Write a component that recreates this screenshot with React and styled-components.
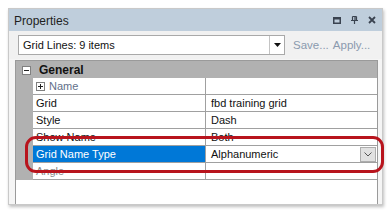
import React from 'react';
import styled, { createGlobalStyle } from 'styled-components';

const GlobalStyle = createGlobalStyle`
    html, body {
        margin: 0;
        padding: 0;
        background: #ffffff;
    }
`;

const uiFont = `"Liberation Sans", Arial, sans-serif`;

const Page = styled.div`
    position: relative;
    width: 392px;
    height: 213px;
    padding: 8px 0 0 8px;
    box-sizing: border-box;
    overflow: hidden;
`;

const Window = styled.div`
    width: 375px;
    height: 197px;
    box-sizing: border-box;
    border: 1px solid #c9c9c9;
    background: #f5f5f5;
    box-shadow: 1px 2px 3px rgba(0, 0, 0, 0.25);
    display: flex;
    flex-direction: column;
    font-family: ${uiFont};
`;

const TitleBar = styled.div`
    height: 22px;
    background: #bfcedc;
    display: flex;
    align-items: center;
    padding: 0 6px 0 5px;
    font-size: 12px;
    color: #1e1e1e;
`;

const Title = styled.span`
    flex: 1;
    padding-top: 1px;
`;

const TitleIcons = styled.div`
    display: flex;
    align-items: center;
    gap: 10px;
`;

const Toolbar = styled.div`
    height: 28px;
    display: flex;
    align-items: center;
    padding: 0 0 0 9px;
    background: #f1f1f1;
`;

const Combo = styled.div`
    width: 267px;
    height: 20px;
    box-sizing: border-box;
    border: 1px solid #a9a9a9;
    background: #ffffff;
    display: flex;
    align-items: stretch;
    font-size: 11px;
    color: #111;
`;

const ComboText = styled.div`
    flex: 1;
    display: flex;
    align-items: center;
    padding-left: 4px;
`;

const ComboArrow = styled.div`
    width: 14px;
    border-left: 1px solid #c4c4c4;
    display: flex;
    align-items: center;
    justify-content: center;
`;

const ToolLink = styled.span`
    font-size: 11.5px;
    color: #8b9aae;
    margin-left: ${(p) => p.gap}px;
`;

const Grid = styled.div`
    flex: 1;
    margin: 1px 4px 0 6px;
    border: 1px solid #9a9a9a;
    border-bottom: none;
    background: #ffffff;
    display: grid;
    grid-template-columns: 17px 173px 1fr;
    grid-auto-rows: 17px;
    align-content: start;
    font-size: 11px;
`;

const Margin = styled.div`
    background: #b1b1b1;
`;

const CategoryRow = styled.div`
    grid-column: 1 / 4;
    height: 18px;
    background: #b1b1b1;
    display: flex;
    align-items: center;
    font-weight: bold;
    font-size: 12px;
    color: #111;
`;

const CategoryToggle = styled.span`
    width: 17px;
    display: flex;
    justify-content: center;
    padding-left: 2px;
`;

const CategoryLabel = styled.span`
    padding-left: 4px;
`;

const Cell = styled.div`
    display: flex;
    align-items: center;
    gap: 4px;
    padding-left: ${(p) => (p.value ? 5 : 3)}px;
    border-bottom: 1px solid #a0a0a0;
    border-right: ${(p) => (p.value ? 'none' : '1px solid #a0a0a0')};
    background: ${(p) => (p.selected ? '#0078d7' : '#ffffff')};
    color: ${(p) => p.color || '#111'};
    white-space: nowrap;
    overflow: hidden;
    box-sizing: border-box;
`;

const DropButton = styled.div`
    margin-left: auto;
    width: 16px;
    height: 15px;
    box-sizing: border-box;
    border: 1px solid #adadad;
    background: #e1e1e1;
    display: flex;
    align-items: center;
    justify-content: center;
    margin-right: 1px;
`;

const Highlight = styled.div`
    position: absolute;
    left: 25px;
    top: 136px;
    width: 359px;
    height: 37px;
    box-sizing: border-box;
    border: 3.5px solid #b8141d;
    border-radius: 11px;
`;

const rows = [
    { name: 'Name', value: '', expand: true, color: '#62708a' },
    { name: 'Grid', value: 'fbd training grid' },
    { name: 'Style', value: 'Dash' },
    { name: 'Show Name', value: 'Both' },
    { name: 'Grid Name Type', value: 'Alphanumeric', selected: true },
    { name: 'Angle', value: '', color: '#8a8a8a' },
];

const PlusMinus = ({ minus }) => (
    <svg width="9" height="9" viewBox="0 0 9 9">
        <rect x="0.5" y="0.5" width="8" height="8" fill="#fff" stroke="#808080" />
        <line x1="2" y1="4.5" x2="7" y2="4.5" stroke="#222" />
        {!minus && <line x1="4.5" y1="2" x2="4.5" y2="7" stroke="#222" />}
    </svg>
);

const App = () => (
    <Page>
        <GlobalStyle />
        <Window>
            <TitleBar>
                <Title>Properties</Title>
                <TitleIcons>
                    <svg width="8" height="7" viewBox="0 0 8 7">
                        <rect x="0.75" y="0.75" width="6.5" height="5.5" fill="none" stroke="#3a4350" strokeWidth="1.5" />
                        <rect x="0" y="0" width="8" height="2.5" fill="#3a4350" />
                    </svg>
                    <svg width="7" height="8" viewBox="0 0 7 8">
                        <path d="M1.5 0.5 H5.5 M1.5 0.5 V4.5 M5.5 0.5 V4.5 M4 0.5 V4.5 M0 4.5 H7 M3.5 4.5 V8" fill="none" stroke="#3a4350" strokeWidth="1.2" />
                    </svg>
                    <svg width="8" height="8" viewBox="0 0 8 8">
                        <path d="M1 1 L7 7 M7 1 L1 7" stroke="#3a4350" strokeWidth="1.8" />
                    </svg>
                </TitleIcons>
            </TitleBar>
            <Toolbar>
                <Combo>
                    <ComboText>Grid Lines: 9 items</ComboText>
                    <ComboArrow>
                        <svg width="7" height="4" viewBox="0 0 7 4">
                            <path d="M0 0 H7 L3.5 4 Z" fill="#111" />
                        </svg>
                    </ComboArrow>
                </Combo>
                <ToolLink gap={8}>Save...</ToolLink>
                <ToolLink gap={4}>Apply...</ToolLink>
            </Toolbar>
            <Grid>
                <CategoryRow>
                    <CategoryToggle>
                        <PlusMinus minus />
                    </CategoryToggle>
                    <CategoryLabel>General</CategoryLabel>
                </CategoryRow>
                {rows.map((r) => (
                    <React.Fragment key={r.name}>
                        <Margin />
                        <Cell selected={r.selected} color={r.selected ? '#ffffff' : r.color}>
                            {r.expand && <PlusMinus />}
                            {r.name}
                        </Cell>
                        <Cell value>
                            {r.value}
                            {r.selected && (
                                <DropButton>
                                    <svg width="8" height="5" viewBox="0 0 8 5">
                                        <path d="M0.5 0.5 L4 4 L7.5 0.5" fill="none" stroke="#555" strokeWidth="1" />
                                    </svg>
                                </DropButton>
                            )}
                        </Cell>
                    </React.Fragment>
                ))}
            </Grid>
        </Window>
        <Highlight />
    </Page>
);

export default App;
